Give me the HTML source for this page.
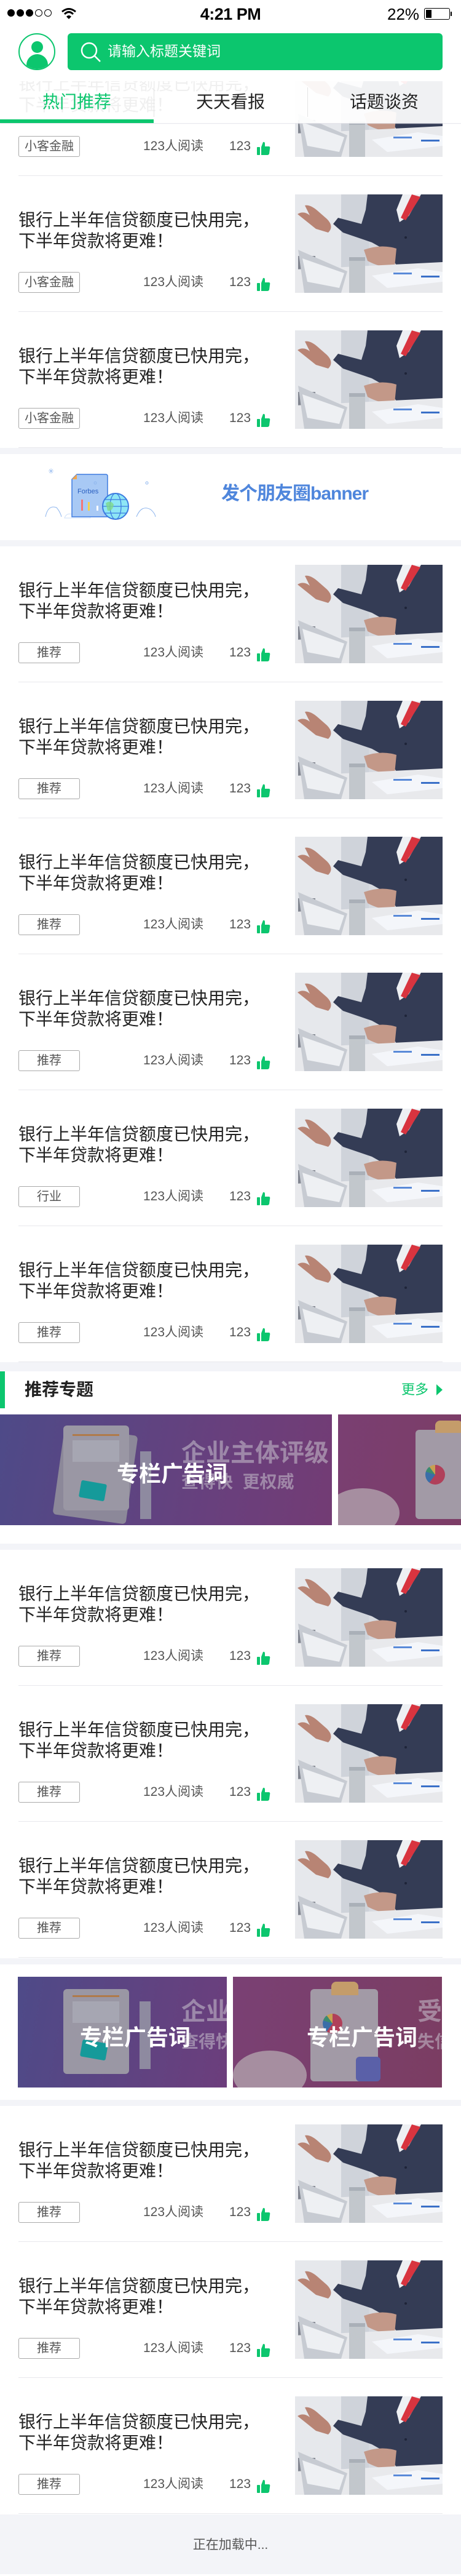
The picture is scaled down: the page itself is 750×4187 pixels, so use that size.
<!DOCTYPE html>
<html><head><meta charset="utf-8">
<style>
*{margin:0;padding:0;box-sizing:border-box}
body{width:750px;height:4184px;background:#fff;font-family:"Liberation Sans","Noto Sans CJK SC",sans-serif;position:relative;overflow:hidden}
.item{position:relative;height:221px;padding-top:30px}
.item .line{position:absolute;left:30px;right:30px;bottom:0;height:1px;background:#e8e8ec}
.item .img{position:absolute;left:480px;top:30px;width:240px;height:160px;display:block}
.title{position:absolute;left:30px;top:55px;font-size:28px;line-height:34px;color:#222}
.tag{position:absolute;left:30px;top:156px;width:100px;height:34px;border:1px solid #aaa;border-radius:3px;font-size:20px;line-height:32px;text-align:center;color:#555}
.reads{position:absolute;left:233px;top:160px;font-size:21px;color:#555;line-height:26px}
.num{position:absolute;left:373px;top:160px;font-size:21px;color:#555;line-height:26px}
.thumb{position:absolute;left:418px;top:165px}
.card{position:absolute;overflow:hidden}
.card .big{position:absolute;color:rgba(200,195,205,.55);font-weight:bold;white-space:nowrap}
.card .ad{position:absolute;color:#fff;font-weight:bold;font-size:36px;white-space:nowrap}
</style></head><body>

<div style="position:absolute;left:0;top:65px;width:750px">
<div id="l1"></div>
</div>

<svg width="0" height="0" style="position:absolute">
<defs>
<symbol id="ph" viewBox="0 0 240 160">
<rect width="240" height="160" fill="#d6d9df"/>
<rect width="75" height="160" fill="#e6e8ec"/>
<rect x="75" width="45" height="130" fill="#cfd3da"/>
<polygon points="118,0 240,0 240,118 165,115 150,92 125,78 78,62 62,48 70,38 108,48 115,25" fill="#343c55"/>
<polygon points="175,0 205,0 185,35 170,45 165,25" fill="#eef0f3"/>
<polygon points="190,0 204,4 180,42 172,38" fill="#d8343f"/>
<circle cx="180" cy="70" r="2" fill="#1e2438"/>
<path d="M4 32 Q14 26 24 34 L16 18 Q24 16 36 26 L52 40 Q64 52 54 62 L34 56 Z" fill="#b88474"/>
<path d="M112 90 Q140 80 165 88 L162 118 Q140 120 118 108 Z" fill="#c39888"/>
<rect x="5" y="100" width="28" height="30" fill="#3e4252" opacity=".6"/>
<polygon points="0,122 240,110 240,160 0,160" fill="#e8e9ec"/>
<polygon points="5,90 85,125 75,160 15,160" fill="#c7cbd2"/>
<polygon points="12,104 80,128 72,152 20,142" fill="#eef0f3"/>
<rect x="88" y="102" width="26" height="58" fill="#c2c7cc"/>
<rect x="88" y="102" width="26" height="6" fill="#aab0b8"/>
<polygon points="125,132 200,120 240,126 240,142 150,152" fill="#f4f6fa"/>
<rect x="160" y="127" width="30" height="3" fill="#5a8ad8"/>
<rect x="205" y="132" width="30" height="3" fill="#3a70c8"/>
</symbol>
<symbol id="th" viewBox="0 0 22 22">
<rect x="0" y="9" width="5" height="13" rx="1" fill="#0cc66e"/>
<path d="M7 9 L10 1 Q13 0 13 4 L13 8 L20 8 Q22 9 21 12 L20 20 Q19 22 17 22 L7 22 Z" fill="#0cc66e"/>
</symbol>
</defs>
</svg>

<div style="position:absolute;left:0;top:0;width:750px;height:132px;background:#fff"></div>
<div style="position:absolute;left:12px;top:15px;display:flex;gap:3px">
<span style="width:12px;height:12px;border-radius:50%;background:#000"></span>
<span style="width:12px;height:12px;border-radius:50%;background:#000"></span>
<span style="width:12px;height:12px;border-radius:50%;background:#000"></span>
<span style="width:12px;height:12px;border-radius:50%;border:1px solid #000"></span>
<span style="width:12px;height:12px;border-radius:50%;border:1px solid #000"></span>
</div>
<svg style="position:absolute;left:100px;top:12px" width="24" height="20" viewBox="0 0 24 20">
<path d="M1 7 Q12 -2 23 7" stroke="#000" stroke-width="3" fill="none"/>
<path d="M5 11 Q12 4 19 11" stroke="#000" stroke-width="3" fill="none"/>
<path d="M8 15 L12 19 L16 15 Q12 11 8 15Z" fill="#000"/>
</svg>
<div style="position:absolute;left:0;width:750px;top:8px;text-align:center;font-size:27px;font-weight:bold;color:#000;letter-spacing:-0.5px">4:21 PM</div>
<div style="position:absolute;left:630px;top:8px;font-size:26px;color:#000">22%</div>
<div style="position:absolute;left:690px;top:13px;width:42px;height:19px;border:1px solid #000;border-radius:3px;padding:2px"><div style="width:9px;height:100%;background:#000"></div></div>
<div style="position:absolute;left:733px;top:19px;width:2px;height:7px;background:#000"></div>

<div style="position:absolute;left:30px;top:54px;width:60px;height:60px;border:2px solid #0cc66e;border-radius:50%;overflow:hidden">
<div style="position:absolute;left:19px;top:11px;width:19px;height:19px;border-radius:50%;background:#0cc66e"></div>
<div style="position:absolute;left:11px;top:32px;width:35px;height:30px;border-radius:18px 18px 0 0;background:#0cc66e"></div>
</div>
<div style="position:absolute;left:110px;top:54px;width:610px;height:60px;background:#0cc66e;border-radius:6px">
<svg style="position:absolute;left:20px;top:13px" width="36" height="36" viewBox="0 0 36 36"><circle cx="15" cy="15" r="12" stroke="#fff" stroke-width="2.5" fill="none"/><path d="M24 24 L33 33" stroke="#fff" stroke-width="2.5"/></svg>
<div style="position:absolute;left:65px;top:14px;font-size:23px;color:#fff;line-height:30px">请输入标题关键词</div>
</div>

<div style="position:absolute;left:0;top:132px;width:750px;height:68px;background:rgba(255,255,255,.93);box-shadow:0 1px 1px #e4e4ea"></div>
<div style="position:absolute;left:0;top:147px;width:250px;text-align:center;font-size:28px;color:#0cc66e;line-height:38px">热门推荐</div>
<div style="position:absolute;left:250px;top:147px;width:250px;text-align:center;font-size:28px;color:#222;line-height:38px">天天看报</div>
<div style="position:absolute;left:500px;top:147px;width:250px;text-align:center;font-size:28px;color:#222;line-height:38px">话题谈资</div>
<div style="position:absolute;left:250px;top:142px;width:1px;height:48px;background:#e4e4e4"></div>
<div style="position:absolute;left:500px;top:142px;width:1px;height:48px;background:#e4e4e4"></div>
<div style="position:absolute;left:0;top:194px;width:250px;height:6px;background:#0cc66e"></div>

<div style="position:absolute;left:0;top:728px;width:750px;height:10px;background:#f3f4f8"></div>
<svg style="position:absolute;left:70px;top:750px" width="190" height="100" viewBox="70 750 190 100">
<path d="M74 840 Q78 820 92 825 Q98 832 100 840" stroke="#8fb6ee" fill="none" stroke-width="1"/>
<path d="M222 840 Q230 820 245 828 Q252 834 253 840" stroke="#8fb6ee" fill="none" stroke-width="1"/>
<path d="M105 842 Q108 833 118 836 Q125 828 135 834 Q145 830 147 842 Z" fill="#fff" stroke="#cfe0f8"/>
<path d="M125 771 L172 771 Q175 771 175 774 L175 840 L117 840 L117 779 Z" fill="#a8c9f5" stroke="#3d7be0" stroke-width="1.5"/>
<path d="M117 779 L125 771 L125 779 Z" fill="#f4a64a"/>
<text x="126" y="802" font-family="Liberation Sans" font-size="11" fill="#2a5fc0">Forbes</text>
<rect x="132" y="812" width="3" height="18" fill="#f27676"/>
<rect x="143" y="816" width="3" height="14" fill="#f5d24a"/>
<rect x="157" y="822" width="3" height="8" fill="#fff"/>
<circle cx="188" cy="823" r="21" fill="#8ee6f5" stroke="#3d7be0" stroke-width="2"/>
<ellipse cx="188" cy="823" rx="9" ry="21" fill="none" stroke="#3d7be0" stroke-width="1.3"/>
<path d="M167 823 L209 823 M170 812 L206 812 M170 834 L206 834" stroke="#3d7be0" stroke-width="1.2"/>
<path d="M172 818 Q180 812 185 820 Q183 832 175 830Z" fill="#7fd88a" opacity=".8"/>
<circle cx="155" cy="785" r="2" fill="none" stroke="#8fb6ee"/>
<circle cx="239" cy="785" r="2" fill="none" stroke="#8fb6ee"/>
<text x="78" y="770" font-size="12" fill="#8fb6ee">✳</text>
</svg>
<div style="position:absolute;left:360px;top:783px;font-size:30px;font-weight:bold;color:#4f86dc;letter-spacing:-1px;line-height:40px">发个朋友圈banner</div>
<div style="position:absolute;left:0;top:878px;width:750px;height:10px;background:#f3f4f8"></div>

<div id="l2" style="position:absolute;left:0;top:888px;width:750px"></div>

<div style="position:absolute;left:0;top:2214px;width:750px;height:15px;background:#f3f4f8"></div>
<div style="position:absolute;left:0;top:2229px;width:8px;height:60px;background:#0cc66e"></div>
<div style="position:absolute;left:40px;top:2240px;font-size:28px;font-weight:bold;color:#222;line-height:38px">推荐专题</div>
<div style="position:absolute;left:653px;top:2244px;font-size:22px;color:#0cc66e;line-height:30px">更多</div>
<div style="position:absolute;left:710px;top:2250px;width:0;height:0;border-left:10px solid #0cc66e;border-top:9px solid transparent;border-bottom:9px solid transparent"></div>

<div class="card" style="left:0;top:2299px;width:540px;height:180px;background:linear-gradient(100deg,#4e4a88,#6a3f7c 70%,#733c74)">
<div style="position:absolute;left:95px;top:26px;width:120px;height:145px;background:#8c8899;border-radius:6px;transform:rotate(8deg)"></div>
<div style="position:absolute;left:103px;top:18px;width:107px;height:138px;background:#9a97a4;border-radius:6px"></div>
<div style="position:absolute;left:118px;top:32px;width:76px;height:3px;background:#b07a4a"></div>
<div style="position:absolute;left:118px;top:42px;width:76px;height:35px;background:#a6a6b2"></div>
<div style="position:absolute;left:130px;top:110px;width:42px;height:28px;background:#159a9a;transform:rotate(10deg);border-radius:3px"></div>
<div style="position:absolute;left:228px;top:60px;width:18px;height:110px;background:#8e8aa0"></div>
<div class="big" style="left:295px;top:30px;font-size:40px">企业主体评级</div>
<div class="big" style="left:295px;top:88px;font-size:28px">查得快 &nbsp;更权威</div>
<div class="ad" style="left:190px;top:68px;font-size:36px">专栏广告词</div>
</div>
<div class="card" style="left:550px;top:2299px;width:200px;height:180px;background:linear-gradient(100deg,#7a3f72,#7c3d66)">
<div style="position:absolute;left:126px;top:25px;width:80px;height:145px;background:#a29aa6;border-radius:6px"></div>
<div style="position:absolute;left:158px;top:10px;width:45px;height:20px;background:#c49c6a;border-radius:8px 8px 0 0"></div>
<div style="position:absolute;left:142px;top:82px;width:32px;height:32px;border-radius:50%;background:conic-gradient(#b0405a 0 60%,#3a6ea8 0 80%,#3c8a70 0 90%,#c8a050 0)"></div>
<div style="position:absolute;left:-20px;top:120px;width:120px;height:80px;border-radius:50%;background:#a68ea0"></div>
</div>
<div style="position:absolute;left:0;top:2509px;width:750px;height:10px;background:#f3f4f8"></div>

<div id="l3" style="position:absolute;left:0;top:2519px;width:750px"></div>

<div style="position:absolute;left:0;top:3183px;width:750px;height:10px;background:#f3f4f8"></div>
<div class="card" style="left:29px;top:3213px;width:340px;height:180px;background:linear-gradient(100deg,#4e4a88,#6c3e7c)">
<div style="position:absolute;left:74px;top:20px;width:107px;height:138px;background:#9a97a4;border-radius:6px"></div>
<div style="position:absolute;left:89px;top:30px;width:76px;height:3px;background:#b07a4a"></div>
<div style="position:absolute;left:89px;top:40px;width:76px;height:35px;background:#a6a6b2"></div>
<div style="position:absolute;left:103px;top:105px;width:42px;height:28px;background:#159a9a;transform:rotate(10deg);border-radius:3px"></div>
<div style="position:absolute;left:198px;top:40px;width:18px;height:110px;background:#8e8aa0"></div>
<div class="big" style="left:266px;top:24px;font-size:40px">企业主体</div>
<div class="big" style="left:266px;top:84px;font-size:28px">查得快</div>
<div class="ad" style="left:101px;top:70px">专栏广告词</div>
</div>
<div class="card" style="left:379px;top:3213px;width:340px;height:180px;background:linear-gradient(100deg,#7a4074,#7b3d62)">
<div style="position:absolute;left:126px;top:20px;width:110px;height:150px;background:#a29aa6;border-radius:6px"></div>
<div style="position:absolute;left:160px;top:8px;width:44px;height:22px;background:#c49c6a;border-radius:8px 8px 0 0"></div>
<div style="position:absolute;left:146px;top:60px;width:32px;height:32px;border-radius:50%;background:conic-gradient(#b0405a 0 60%,#3a6ea8 0 80%,#3c8a70 0 90%,#c8a050 0)"></div>
<div style="position:absolute;left:0;top:120px;width:120px;height:80px;border-radius:50%;background:#a68ea0"></div>
<div style="position:absolute;left:200px;top:130px;width:40px;height:40px;background:#5a60a8;border-radius:6px"></div>
<div class="big" style="left:300px;top:24px;font-size:40px">受</div>
<div class="big" style="left:300px;top:84px;font-size:28px">失信</div>
<div class="ad" style="left:120px;top:70px">专栏广告词</div>
</div>
<div style="position:absolute;left:0;top:3413px;width:750px;height:10px;background:#f3f4f8"></div>

<div id="l4" style="position:absolute;left:0;top:3423px;width:750px"></div>

<div style="position:absolute;left:0;top:4087px;width:750px;height:97px;background:#f3f4f8;text-align:center;font-size:21px;color:#555;line-height:100px">正在加载中...</div>

<template id="t"><div class="item"><svg class="img"><use href="#ph"/></svg><div class="title">银行上半年信贷额度已快用完，<br>下半年贷款将更难！</div><div class="tag">推荐</div><div class="reads">123人阅读</div><div class="num">123</div><svg class="thumb" width="22" height="22"><use href="#th"/></svg><div class="line"></div></div></template>
<script>
var t=document.getElementById('t').innerHTML;
function fill(id,tags){var h='';tags.forEach(function(g){h+=t.replace('>推荐<','>'+g+'<');});document.getElementById(id).innerHTML=h;}
fill('l1',['小客金融','小客金融','小客金融']);
fill('l2',['推荐','推荐','推荐','推荐','行业','推荐']);
fill('l3',['推荐','推荐','推荐']);
fill('l4',['推荐','推荐','推荐']);
</script>
</body></html>
